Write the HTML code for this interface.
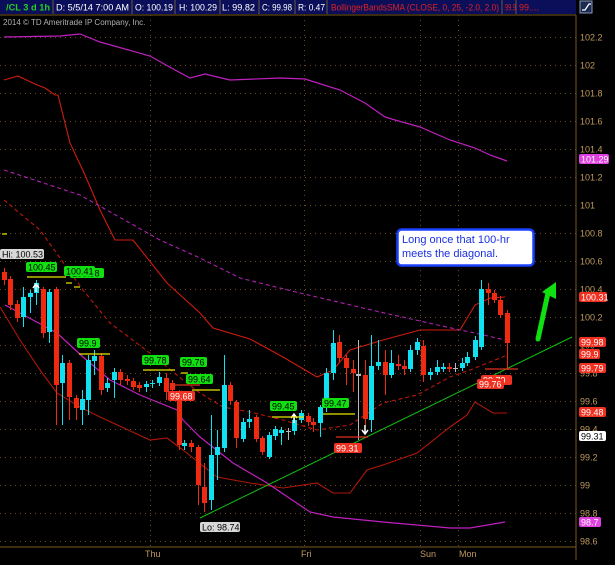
<!DOCTYPE html><html><head><meta charset="utf-8"><style>
body{margin:0;background:#000;width:615px;height:560px;overflow:hidden;font-family:"Liberation Sans",sans-serif}
svg text{font-family:"Liberation Sans",sans-serif}
</style></head><body>
<svg id="s" width="615" height="560" xmlns="http://www.w3.org/2000/svg">
<rect width="615" height="560" fill="#000"/>
<rect x="0" y="0" width="576" height="14" fill="#0b0f5a"/>
<g fill="#fff" font-size="9">
<text x="6" y="10.5" fill="#20d020" font-weight="bold" textLength="44" lengthAdjust="spacingAndGlyphs">/CL 3 d 1h</text>
<text x="56" y="10.5" textLength="73" lengthAdjust="spacingAndGlyphs">D: 5/5/14 7:00 AM</text>
<text x="135" y="10.5" textLength="38" lengthAdjust="spacingAndGlyphs">O: 100.19</text>
<text x="179" y="10.5" textLength="38" lengthAdjust="spacingAndGlyphs">H: 100.29</text>
<text x="222" y="10.5" textLength="33" lengthAdjust="spacingAndGlyphs">L: 99.82</text>
<text x="262" y="10.5" textLength="30" lengthAdjust="spacingAndGlyphs">C: 99.98</text>
<text x="298" y="10.5" textLength="27" lengthAdjust="spacingAndGlyphs">R: 0.47</text>
<text x="331" y="10.5" fill="#e02020" textLength="168" lengthAdjust="spacingAndGlyphs">BollingerBandsSMA (CLOSE, 0, 25, -2.0, 2.0)</text>
<text x="505" y="10.5" fill="#e02020" textLength="11" lengthAdjust="spacingAndGlyphs">99.9</text>
<text x="519" y="10.5" fill="#e02020" textLength="20" lengthAdjust="spacingAndGlyphs">99....</text>
</g>
<g stroke="#6a5a40" stroke-width="1"><line x1="53" y1="0" x2="53" y2="14"/><line x1="132" y1="0" x2="132" y2="14"/><line x1="175" y1="0" x2="175" y2="14"/><line x1="220" y1="0" x2="220" y2="14"/><line x1="259" y1="0" x2="259" y2="14"/><line x1="295" y1="0" x2="295" y2="14"/><line x1="327" y1="0" x2="327" y2="14"/><line x1="502" y1="0" x2="502" y2="14"/><line x1="516" y1="0" x2="516" y2="14"/></g>
<line x1="0" y1="15" x2="576" y2="15" stroke="#7a5a20"/>
<rect x="580" y="1" width="12" height="12" fill="#1a2a50" stroke="#8899bb"/>
<path d="M582 10 L585 10 L589 4 L591 4" stroke="#fff" fill="none" stroke-width="1.3"/>
<text x="3" y="25" fill="#b0b0b0" font-size="8">2014 © TD Ameritrade IP Company, Inc.</text>
<g id="grid"></g>
<line x1="576" y1="15" x2="576" y2="560" stroke="#7a5a20"/>
<line x1="0" y1="547" x2="576" y2="547" stroke="#7a5a20"/>
<g fill="#c09a60" font-size="9"><text x="145" y="557">Thu</text><text x="301" y="557">Fri</text><text x="420" y="557">Sun</text><text x="459" y="557">Mon</text></g>
<g id="axis" fill="#c09a60" font-size="9"></g>
<polyline fill="none" stroke="#c020c0" stroke-width="1.2" points="4,37 60,36 80,34 100,42 150,56 175,70 190,78 205,74 230,80 280,78 305,79 340,90 365,103 385,117 395,120 420,127 450,140 475,148 490,155 507,161"/>
<polyline fill="none" stroke="#d01c0c" stroke-width="1.1" points="4,80 18,76 35,84 45,88 55,95 58,95 70,143 85,175 100,210 115,240 133,240 167,283 200,313 213,328 250,339 283,357 317,377 333,370 350,350 383,340 420,330 460,330 475,305 490,298 505,297"/>
<polyline fill="none" stroke="#b01808" stroke-width="1.1" points="0,307 20,340 40,370 57,393 80,407 100,417 150,440 167,438 183,450 217,477 250,483 283,488 317,483 333,493 350,493 367,470 383,465 417,453 450,427 467,415 475,402 493,413 507,413"/>
<polyline fill="none" stroke="#c020c0" stroke-width="1.2" points="5,305 33,320 57,333 83,357 110,380 140,395 177,410 183,420 200,437 233,463 267,483 310,512 333,517 383,522 450,528 470,528 505,522"/>
<polyline fill="none" stroke="#b020b0" stroke-width="1.1" stroke-dasharray="4,3" points="4,170 80,195 160,240 200,258 240,278 300,293 380,312 460,330 475,333 505,340"/>
<polyline fill="none" stroke="#c01808" stroke-width="1.1" stroke-dasharray="4,3" points="4,200 40,230 65,265 83,290 110,323 150,353 183,380 200,393 223,407 250,412 283,420 317,430 350,425 383,403 417,395 450,377 470,370 505,356"/>
<line x1="200" y1="518" x2="572" y2="337" stroke="#10c010" stroke-width="1"/>
<g id="c"></g>
<path d="M538 339 L548 293" stroke="#10e010" stroke-width="5" stroke-linecap="round"/>
<path d="M542 292 L556 282 L556 299 Z" fill="#10e010"/>
<g stroke="#e8e800" stroke-width="1.2"><line x1="27" y1="277" x2="66" y2="277"/><line x1="66" y1="283" x2="72" y2="283"/><line x1="74" y1="287" x2="80" y2="287"/><line x1="79" y1="354" x2="110" y2="354"/><line x1="143" y1="370" x2="175" y2="370"/><line x1="181" y1="373" x2="188" y2="373"/><line x1="192" y1="390" x2="220" y2="390"/><line x1="272" y1="417" x2="304" y2="417"/><line x1="323" y1="414" x2="355" y2="414"/><line x1="2" y1="234" x2="7" y2="234"/></g>
<g stroke="#e03020" stroke-width="1.2"><line x1="170" y1="385" x2="200" y2="385"/><line x1="336" y1="437" x2="368" y2="437"/><line x1="485" y1="369" x2="518" y2="369"/></g>
<g id="lab" font-size="9"></g>
<rect x="397.5" y="229.5" width="136" height="36" rx="4" fill="#fff" stroke="#1a40ff" stroke-width="2.5"/>
<text x="402" y="243" fill="#1a30e0" font-size="11">Long once that 100-hr</text>
<text x="402" y="257" fill="#1a30e0" font-size="11">meets the diagonal.</text>
</svg>
<script>
var NS="http://www.w3.org/2000/svg";
function el(p,t,a){var e=document.createElementNS(NS,t);for(var k in a)e.setAttribute(k,a[k]);p.appendChild(e);return e;}
var g=document.getElementById('grid');
function y(p){return 37+(102.2-p)*140;}
for(var i=0;i<=18;i++){var p=102.2-i*0.2;var yy=Math.round(y(p))+.5;el(g,'line',{x1:0,y1:yy,x2:576,y2:yy,stroke:'#6b4a1c','stroke-dasharray':'1,4'});
var v=Math.round(p*10)/10;var s=(v%1===0)?String(v):v.toFixed(1);
var t=el(document.getElementById('axis'),'text',{x:580,y:yy+3});t.textContent=s;}
[150,304,420,458].forEach(function(x){el(g,'line',{x1:x+.5,y1:15,x2:x+.5,y2:547,stroke:'#6b4a1c','stroke-dasharray':'1,4'});});
var C=[[4,'r',272,280,268,285],[10,'r',279,305,276,310],[17,'r',304,318,300,322],[23,'u',297,317,287,327],[30,'u',293,297,290,313],[36,'u',283,293,280,305],[43,'r',289,333,287,338],[49,'u',292,332,289,343],[56,'r',289,385,287,425],[62,'u',363,383,355,425],[69,'r',363,397,360,420],[76,'r',398,408,395,420],[82,'u',399,410,390,425],[88,'u',360,400,355,415],[94,'u',356,361,350,375],[101,'r',356,390,353,395],[107,'u',383,388,378,392],[114,'u',372,380,368,398],[120,'r',372,380,369,385],[127,'r',379,381,375,385],[133,'r',381,387,378,390],[139,'r',385,388,382,392],[146,'u',384,387,381,392],[152,'u',383,384,380,388],[159,'u',377,383,372,386],[166,'r',378,392,373,400],[172,'r',383,390,380,395],[179,'r',393,445,390,450],[184,'u',443,446,440,450],[191,'r',443,447,440,452],[198,'r',447,485,445,505],[204,'r',487,503,463,512],[211,'u',455,500,415,510],[217,'u',447,455,430,480],[224,'u',385,448,355,452],[230,'r',385,401,382,405],[236,'r',402,438,400,448],[243,'u',422,439,418,442],[249,'u',419,422,410,428],[256,'r',417,439,415,442],[262,'r',438,452,436,455],[269,'u',435,457,432,459],[275,'u',429,436,426,440],[281,'u',430,433,427,445],[288,'g',431,432,428,440],[294,'u',420,431,415,435],[301,'u',413,420,410,423],[308,'r',416,422,413,426],[313,'r',422,425,418,432],[320,'u',407,423,405,437],[326,'u',373,408,368,412],[333,'u',343,373,330,380],[339,'r',342,358,335,362],[346,'r',358,368,355,385],[353,'r',369,373,360,392],[358,'g',374,376,340,440],[365,'r',375,419,360,425],[371,'u',366,420,335,432],[378,'u',362,366,340,370],[385,'r',362,375,350,395],[391,'u',363,375,350,378],[398,'r',364,366,355,370],[404,'r',366,369,360,375],[410,'u',350,369,345,372],[417,'u',342,350,338,355],[423,'r',346,375,340,382],[430,'u',372,375,368,380],[437,'u',367,372,360,375],[443,'u',367,369,363,372],[449,'r',367,369,363,372],[455,'g',368,369,363,372],[462,'u',363,368,358,371],[467,'u',357,363,352,366],[475,'u',340,357,336,360],[481,'u',289,347,280,350],[488,'r',289,293,283,305],[494,'r',293,300,290,303],[500,'r',300,315,296,318],[507,'r',313,343,310,370]];
var cg=document.getElementById('c');
C.forEach(function(c){var col=c[1]=='u'?'#10e0f0':c[1]=='r'?'#f02a10':'#bbbbbb';
el(cg,'line',{x1:c[0]+.5,y1:c[4],x2:c[0]+.5,y2:c[5],stroke:col});
el(cg,'rect',{x:c[0]-2,y:c[2],width:5,height:Math.max(1,c[3]-c[2]),fill:col});});
el(cg,'path',{d:'M36 292 L36 285 M33 288 L36 284 L39 288',stroke:'#fff','stroke-width':1.5,fill:'none'});
el(cg,'path',{d:'M294 423 L294 415 M291 418 L294 414 L297 418',stroke:'#fff','stroke-width':1.5,fill:'none'});
el(cg,'path',{d:'M365 425 L365 433 M362 430 L365 434 L368 430',stroke:'#fff','stroke-width':1.5,fill:'none'});
var L=[[26,262,31,'#10e010','#000','100.45'],[70,268,34,'#10e010','#000','100.38'],[64,266,31,'#10e010','#000','100.41'],[77,338,23,'#10e010','#000','99.9'],[142,355,27,'#10e010','#000','99.78'],[180,357,27,'#10e010','#000','99.76'],[186,374,27,'#10e010','#000','99.64'],[168,391,27,'#f03020','#fff','99.68'],[270,401,27,'#10e010','#000','99.45'],[322,398,27,'#10e010','#000','99.47'],[334,443,28,'#f03020','#fff','99.31'],[200,522,40,'#d8d8d8','#000','Lo: 98.74'],[0,249,44,'#d8d8d8','#000','Hi: 100.53'],[481,375,31,'#f03020','#fff','99.79'],[477,379,27,'#f03020','#fff','99.76'],
[579,292,28,'#f03020','#fff','100.31'],[579,337,27,'#f03020','#fff','99.98'],[579,349,21,'#f03020','#fff','99.9'],[579,363,27,'#f03020','#fff','99.79'],[579,407,27,'#f03020','#fff','99.48'],[579,431,27,'#ffffff','#000','99.31'],[579,154,30,'#e040e0','#fff','101.29'],[579,517,22,'#e040e0','#fff','98.7']];
var lg=document.getElementById('lab');
L.forEach(function(l){el(lg,'rect',{x:l[0],y:l[1],width:l[2],height:10,rx:2,fill:l[3]});var t=el(lg,'text',{x:l[0]+2,y:l[1]+8.5,fill:l[4]});t.textContent=l[5];});
</script>
</body></html>
